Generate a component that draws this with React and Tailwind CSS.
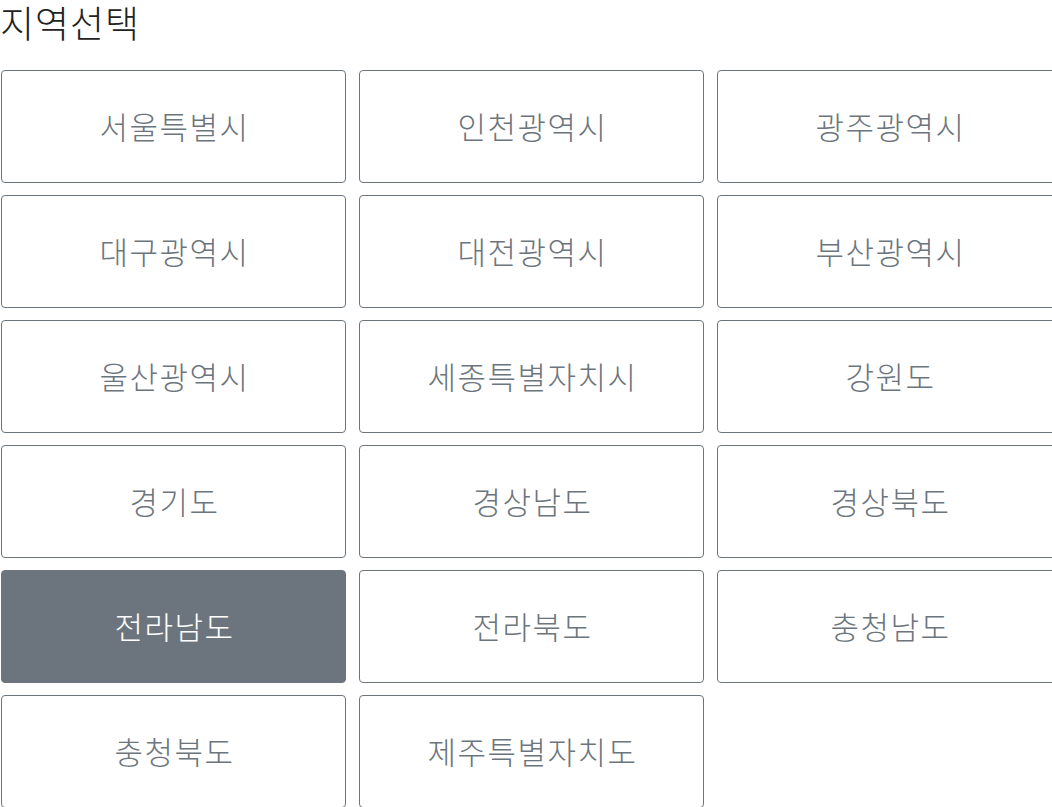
import React, { useState } from "react";

const REGIONS = [
  "서울특별시",
  "인천광역시",
  "광주광역시",
  "대구광역시",
  "대전광역시",
  "부산광역시",
  "울산광역시",
  "세종특별자치시",
  "강원도",
  "경기도",
  "경상남도",
  "경상북도",
  "전라남도",
  "전라북도",
  "충청남도",
  "충청북도",
  "제주특별자치도",
];

const FONT = { fontFamily: '"Noto Sans CJK KR", "Noto Sans", sans-serif' };

const App = () => {
  const [selected, setSelected] = useState("전라남도");

  return (
    <div className="w-screen h-screen overflow-hidden bg-white" style={FONT}>
      <h2 className="h-[44px] text-[37px] leading-[44px] font-light text-[#222] tracking-[1px]">
        지역선택
      </h2>

      <div className="mt-[26px] ml-[1px] grid grid-cols-[345px_345px_345px] gap-x-[13px] gap-y-[12px]">
        {REGIONS.map((name) => {
          const active = name === selected;
          return (
            <button
              key={name}
              type="button"
              onClick={() => setSelected(name)}
              className={
                active
                  ? "h-[113px] rounded border border-[#6c757d] bg-[#6c757d] pl-[2px] text-white text-[31px] font-light tracking-[1.5px]"
                  : "h-[113px] rounded border border-[#6c757d] bg-white pl-[2px] text-[#6c757d] text-[31px] font-light tracking-[1.5px]"
              }
            >
              {name}
            </button>
          );
        })}
      </div>
    </div>
  );
};

export default App;
